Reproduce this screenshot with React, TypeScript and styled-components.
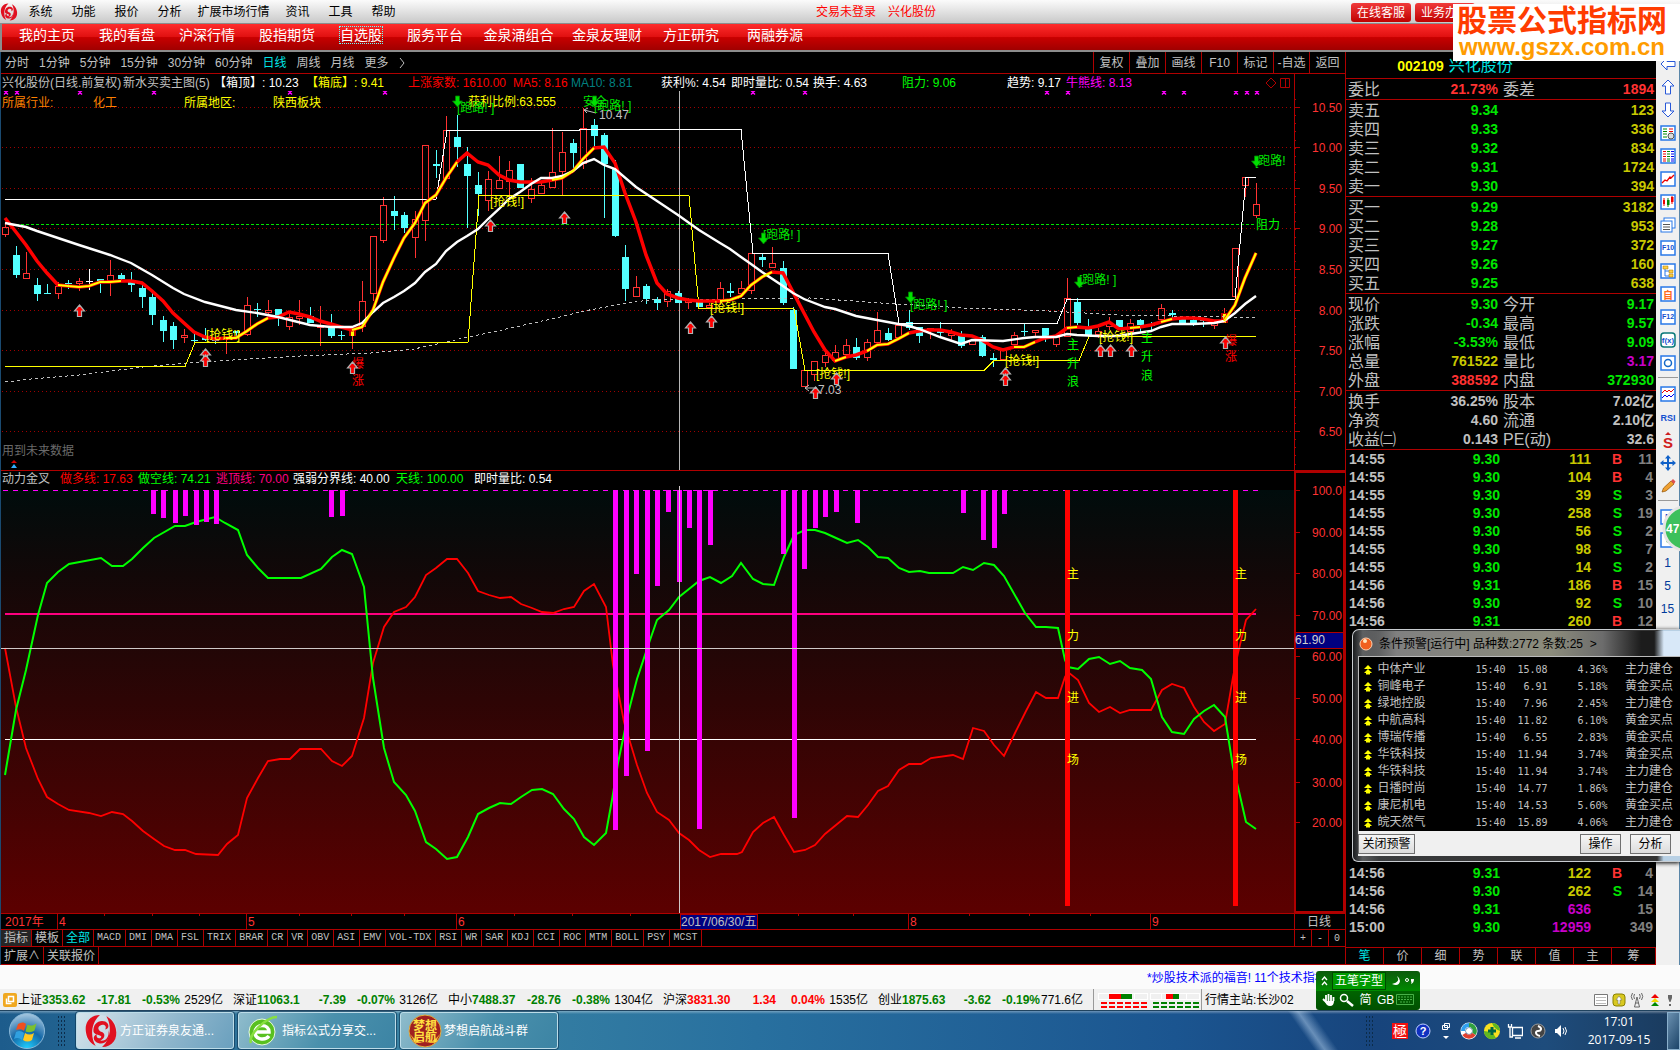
import React from "react";
import styled, { createGlobalStyle, css } from "styled-components";

const RED = "#b00000";
const UP = "#ff3232";
const DOWN = "#00e600";
const AMBER = "#c8c800";
const SILVER = "#c0c0c0";
const CYAN = "#00e5e5";
const SANS = `"Liberation Sans", "Noto Sans CJK SC", sans-serif`;
const MONO = `"Liberation Mono", "Noto Sans CJK SC", monospace`;

const GlobalStyle = createGlobalStyle`
  *, *::before, *::after { box-sizing: border-box; }
  body { margin: 0; background: #000; font: 12px/16px ${SANS}; color: ${SILVER}; overflow-x: hidden; }
  button { font: inherit; color: inherit; background: none; border: 0; padding: 0; margin: 0; cursor: pointer; white-space: nowrap; }
  svg { display: block; }
`;

/* ---------- shell ---------- */

const Desktop = styled.div`
  position: relative;
  display: flex;
  flex-direction: column;
  min-height: 100vh;
`;

const MenuBar = styled.header`
  display: grid;
  grid-template-columns: 19px 15fr auto 14fr;
  align-items: center;
  height: 23px;
  background: linear-gradient(#fbfbfb, #c9c9c9);
  color: #000;
`;

const MenuList = styled.nav`
  display: flex;
`;

const MenuItem = styled.button<{ $w: number }>`
  width: ${(p) => p.$w}px;
  height: 22px;
`;

const LoginState = styled.div`
  display: flex;
  gap: 12px;
  color: #f00;
`;

const ServiceButtons = styled.div`
  display: flex;
  justify-content: flex-end;
  gap: 4px;
  padding: 3px 205px 0 0;
  align-self: start;
`;

const ServiceButton = styled.button`
  width: 60px;
  height: 19px;
  border-radius: 3px;
  background: linear-gradient(#f03a3a, #c00000);
  color: #fff;
`;

const NavBar = styled.nav`
  display: flex;
  height: 29px;
  padding: 0 5px;
  border: solid #8c8c8c;
  border-width: 1px 0 2px 2px;
  background: linear-gradient(#ff2c2c, #e01010 50%, #c80000 52%, #a00000);
`;

const NavTab = styled.button<{ $w: number }>`
  width: ${(p) => p.$w}px;
  color: #fff;
  font-size: 14px;
  line-height: 16px;
  padding-bottom: 4px;
`;

const NavLabel = styled.span<{ $on?: boolean }>`
  outline: ${(p) => (p.$on ? "1px dotted #6ff" : "none")};
`;

const Workspace = styled.main`
  display: grid;
  grid-template-columns: minmax(0, 1fr) 311px 24px;
`;

const ChartColumn = styled.section`
  display: flex;
  flex-direction: column;
  min-width: 0;
  border-left: 1px solid #1a4a70;
`;

/* ---------- period bar ---------- */

const PeriodBar = styled.div`
  display: flex;
  justify-content: space-between;
  height: 22px;
  border-bottom: 1px solid ${RED};
`;

const PeriodList = styled.div`
  display: flex;
  align-items: center;
  gap: 10px;
  padding-left: 4px;
`;

const Period = styled.button<{ $on?: boolean }>`
  color: ${(p) => (p.$on ? CYAN : SILVER)};
`;

const ToolList = styled.div`
  display: flex;
`;

const Tool = styled.button`
  width: 36px;
  border-left: 1px solid ${RED};
`;

/* ---------- charts ---------- */

const Legend = styled.div<{ $cols: string; $top?: boolean }>`
  display: grid;
  grid-template-columns: ${(p) => p.$cols};
  height: ${(p) => (p.$top ? 16 : 17)}px;
  padding-left: 1px;
  border-top: ${(p) => (p.$top ? `1px solid ${RED}` : "0")};
  line-height: ${(p) => (p.$top ? 16 : 18)}px;
  white-space: nowrap;
`;

const LegendItem = styled.span<{ $c?: string }>`
  color: ${(p) => p.$c ?? SILVER};
`;

const LegendTools = styled.span`
  display: flex;
  align-items: center;
  gap: 4px;
`;

const AxisCap = styled.span<{ $box?: boolean }>`
  border-left: ${(p) => (p.$box ? 2 : 1)}px solid ${RED};
  border-top: ${(p) => (p.$box ? `2px solid ${RED}` : "0")};
`;

const Plot = styled.svg`
  width: 100%;
  height: auto;
  font-family: ${SANS};
  font-size: 12px;
`;

const TabRow = styled.div<{ $last?: boolean }>`
  display: flex;
  height: ${(p) => (p.$last ? 19 : 17)}px;
  border-top: 1px solid ${RED};
  border-bottom: ${(p) => (p.$last ? `1px solid ${RED}` : "0")};
`;

const IndicatorTab = styled.button<{ $on?: boolean; $dark?: boolean }>`
  padding: 0 3px;
  border-right: 1px solid ${RED};
  color: ${(p) => (p.$on ? CYAN : SILVER)};
  background: ${(p) => (p.$dark ? "#262626" : "none")};
  line-height: 16px;
`;

const CodeTab = styled.button`
  padding: 0 4px 0 3px;
  border-right: 1px solid ${RED};
  font: 10px/16px ${MONO};
`;

const ZoomButtons = styled.div`
  display: flex;
  margin-left: auto;
  width: 51px;
`;

const ZoomButton = styled.button`
  flex: 1;
  border-left: 1px solid ${RED};
  font: 10px/15px ${MONO};
`;

/* ---------- quote panel ---------- */

const QuotePanel = styled.aside`
  display: flex;
  flex-direction: column;
  border-left: 1px solid ${RED};
`;

const QuoteTitle = styled.h1`
  display: flex;
  justify-content: center;
  gap: 5px;
  height: 27px;
  margin: 0;
  padding: 2px 92px 0 0;
  border-bottom: 1px solid ${RED};
  font-size: 16px;
  line-height: 24px;
  font-weight: 400;
  color: ${CYAN};
`;

const StockCode = styled.strong`
  color: #ff0;
  font-size: 14px;
`;

const QuoteTable = styled.table`
  width: 100%;
  table-layout: fixed;
  border-collapse: separate;
  border-spacing: 0;
  padding-top: 1px;
  border-bottom: 1px solid ${RED};
  line-height: 19px;
`;

const QuoteLabel = styled.th<{ $second?: boolean }>`
  width: ${(p) => (p.$second ? 72 : 58)}px;
  height: 19px;
  padding: 0 0 0 ${(p) => (p.$second ? 3 : 2)}px;
  font-size: 16px;
  font-weight: 400;
  text-align: left;
  white-space: nowrap;
`;

const QuoteValue = styled.td<{ $c: string; $w?: number }>`
  width: ${(p) => (p.$w ? p.$w + "px" : "auto")};
  height: 19px;
  padding: 0 2px 0 0;
  text-align: right;
  font-size: 14px;
  font-weight: 700;
  color: ${(p) => p.$c};
`;

const TickTable = styled.table`
  width: 100%;
  table-layout: fixed;
  border-collapse: separate;
  border-spacing: 0;
  font-size: 14px;
  font-weight: 700;
  line-height: 18px;
`;

const Tick = styled.td<{ $w?: number; $c?: string; $left?: boolean }>`
  width: ${(p) => (p.$w ? p.$w + "px" : "auto")};
  height: 18px;
  padding: 0 3px;
  text-align: ${(p) => (p.$left ? "left" : "right")};
  color: ${(p) => p.$c ?? SILVER};
`;

const Spacer = styled.div`
  flex: none;
  height: 234px;
`;

const QuoteTabs = styled.div`
  display: grid;
  grid-template-columns: repeat(7, 38px) 1fr;
  height: 18px;
  margin-top: auto;
  border: solid ${RED};
  border-width: 1px 1px 1px 0;
`;

const QuoteTab = styled.button<{ $on?: boolean }>`
  color: ${(p) => (p.$on ? CYAN : SILVER)};
  border-right: 1px solid ${RED};
  &:last-child { border-right: 0; }
`;

const SideBar = styled.aside`
  display: flex;
  flex-direction: column;
  align-items: center;
  background: #f0f0f0;
  border-right: 1px solid #5a86a8;
`;

const SideButton = styled.button`
  display: grid;
  place-items: center;
  flex: none;
  width: 20px;
  height: 23px;
  color: #003a9b;
`;

const SideRule = styled.hr`
  flex: none;
  width: 20px;
  margin: 3px 0 4px;
  border: 0;
  border-top: 1px solid #999;
`;

/* ---------- bottom bars ---------- */

const Marquee = styled.div`
  display: flex;
  align-items: center;
  justify-content: flex-end;
  height: 24px;
  padding: 2px 363px 0 0;
  background: #fbfbfb;
`;

const MarqueeLink = styled.a`
  width: 170px;
  overflow: hidden;
  white-space: nowrap;
  color: #00f;
  text-decoration: none;
`;

const StatusBar = styled.footer`
  display: flex;
  align-items: center;
  height: 22px;
  padding-left: 3px;
  background: #f0f0f0;
  border-bottom: 1px solid #20435f;
  color: #000;
`;

const IndexList = styled.ul`
  display: flex;
  margin: 0;
  padding: 0 0 0 1px;
  list-style: none;
`;

const IndexItem = styled.li<{ $c: string }>`
  display: grid;
  grid-template-columns: 24px 47px 42px 49px 43px;
  width: 215px;
  white-space: nowrap;
  text-align: right;
  b { color: ${(p) => p.$c}; }
  b:nth-child(2) { text-align: left; }
`;

const Station = styled.div`
  display: flex;
  align-items: center;
  height: 21px;
  padding-left: 3px;
  border-left: 1px solid #999;
`;

const StatusIcons = styled.div`
  display: flex;
  align-items: center;
  gap: 4px;
  margin-left: auto;
  padding-right: 6px;
`;

const TaskBar = styled.footer`
  display: flex;
  align-items: center;
  height: 39px;
  background:
    linear-gradient(rgba(255,255,255,.35), rgba(255,255,255,0) 8%),
    linear-gradient(55deg, transparent 77%, rgba(170,200,230,.55) 77.6%, transparent 78.4%),
    linear-gradient(90deg, #1d5c8c, #3a84a4 25%, #28709f 45%, #1b5590 70%, #17447c 82%, #1e4c7c 92%, #1a3a5c);
  color: #fff;
`;

const StartButton = styled.button`
  width: 54px;
  height: 39px;
  display: grid;
  place-items: center;
`;

const Grip = styled.span<{ $dark?: boolean }>`
  width: 9px;
  height: 31px;
  margin: ${(p) => (p.$dark ? "0 13px 0 0" : "0 10px 0 3px")};
  background: radial-gradient(circle, #0c2c4a 1px, transparent 1px) 0 0 / 3px 4px;
`;

const TaskButton = styled.button<{ $on?: boolean }>`
  display: flex;
  align-items: center;
  gap: 2px;
  width: 158px;
  height: 37px;
  margin-right: 4px;
  padding-left: 7px;
  border: 1px solid #bcdce8;
  border-radius: 3px;
  box-shadow: 0 0 0 1px rgba(10, 50, 80, 0.6);
  background: ${(p) =>
    p.$on
      ? "linear-gradient(120deg, #d4e4ec, #8fb6cc 60%, #6aa0be)"
      : "linear-gradient(120deg, #8fbccc, #4a90ac 55%, #3c84a4)"};
`;

const Tray = styled.div`
  display: flex;
  align-items: center;
  gap: 3px;
  margin-left: auto;
`;

const TrayButton = styled.button`
  display: grid;
  place-items: center;
  width: 20px;
  height: 24px;
`;

const Clock = styled.time`
  width: 90px;
  text-align: center;
  font: 12px/18px "Open Sans", sans-serif;
`;

const ShowDesktop = styled.button`
  width: 13px;
  height: 38px;
  border: 1px solid #8ab0cc;
  background: linear-gradient(120deg, #6a90b0, #1c4468);
`;

/* ---------- overlays ---------- */

const Watermark = styled.div`
  position: absolute;
  top: 4px;
  right: 0;
  width: 227px;
  height: 57px;
  background: #fff;
  text-align: center;
  padding-right: 9px;
  font-weight: 700;
`;

const MarkName = styled.div`
  font-size: 30px;
  line-height: 34px;
  color: #ff3c00;
`;

const MarkUrl = styled.div`
  font-size: 24px;
  line-height: 18px;
  color: #ff9c00;
`;

const Bubble = styled.div`
  position: absolute;
  top: 505px;
  right: 0;
  width: 19px;
  height: 47px;
  overflow: hidden;
`;

const AlertWindow = styled.section`
  position: absolute;
  top: 629px;
  right: 0;
  width: 328px;
  padding: 1px 0 5px 5px;
  border: 1px solid #c8ccd0;
  border-right: 0;
  border-radius: 7px 0 0 6px;
  background: linear-gradient(90deg, #1a1c1e, #5a5c5e 3%, #3a3c3e 8%, #333 60%, #333 93%, #b8d0e4 95%);
  box-shadow: 0 1px 4px #000;
`;

const AlertTitle = styled.h2`
  display: flex;
  align-items: center;
  gap: 6px;
  height: 25px;
  margin: 0;
  padding-left: 1px;
  font-size: 12px;
  font-weight: 400;
  color: #000;
  background: linear-gradient(90deg, transparent, #808080 12%, #8c8c7c 60%, #6c6c6c 76%, #1c1c1c 88%, #1c1c1c 92%, #d8e8f8 95%);
`;

const AlertTable = styled.table`
  width: 323px;
  table-layout: fixed;
  border-collapse: collapse;
  background: #000;
  border: solid #bbb;
  border-width: 1px 0 0 1px;
  td { height: 17px; padding: 0; line-height: 17px; white-space: nowrap; }
  tr:first-child td { height: 21px; padding-top: 4px; }
`;

const AlertCell = styled.td<{ $w?: number; $num?: boolean }>`
  width: ${(p) => (p.$w ? p.$w + "px" : "auto")};
  ${(p) =>
    p.$num &&
    css`
      text-align: right;
      font: 10px/17px "DejaVu Sans Mono", monospace;
    `}
`;

const AlertGlyph = styled.svg`
  width: 14px;
  height: 10px;
`;

const AlertSignal = styled.td`
  text-align: right;
  &&& { padding-right: 8px; }
`;

const AlertFooter = styled.div`
  display: flex;
  gap: 9px;
  height: 25px;
  padding-top: 3px;
  background: #f0f0f0;
`;

const AlertButton = styled.button<{ $w: number; $push?: boolean }>`
  width: ${(p) => p.$w}px;
  height: 20px;
  margin-left: ${(p) => (p.$push ? "auto" : "0")};
  border: 1px solid #707070;
  background: linear-gradient(#f6f6f6, #dcdcdc);
  color: #000;
  &:last-child { margin-right: 9px; }
`;

const Ime = styled.div`
  position: absolute;
  bottom: 40px;
  right: 260px;
  width: 104px;
  height: 39px;
  border-radius: 3px;
  background: linear-gradient(#0c5a0c, #008a00 50%, #006400 52%, #005000);
  color: #fff;
`;

const ImeRow = styled.div`
  display: flex;
  align-items: center;
  gap: 4px;
  height: 19px;
  padding-left: 5px;
`;

const ImeButton = styled.button<{ $wide?: boolean }>`
  display: grid;
  place-items: center;
  width: ${(p) => (p.$wide ? 54 : 15)}px;
  height: 18px;
  background: ${(p) => (p.$wide ? "#009a00" : "none")};
  border: ${(p) => (p.$wide ? "1px solid #004a00" : "0")};
`;

/* ---------- data ---------- */

const menus: [string, number][] = [
  ["系统", 43], ["功能", 43], ["报价", 43], ["分析", 43],
  ["扩展市场行情", 85], ["资讯", 43], ["工具", 43], ["帮助", 43],
];

const navTabs: [string, number][] = [
  ["我的主页", 80], ["我的看盘", 80], ["沪深行情", 80], ["股指期货", 80], ["自选股", 68],
  ["服务平台", 80], ["金泉涌组合", 87], ["金泉友理财", 90], ["方正研究", 78], ["两融券源", 90],
];

const periods = ["分时", "1分钟", "5分钟", "15分钟", "30分钟", "60分钟", "日线", "周线", "月线", "更多"];
const tools = ["复权", "叠加", "画线", "F10", "标记", "-自选", "返回"];

// kind, body top, body bottom, high, low
type Candle = [string, number, number, number, number];
const candles: Candle[] = [
  ["r", 227, 235, 224, 237], ["c", 255, 275, 246, 278], ["r", 273, 279, 252, 279], ["c", 285, 294, 278, 301],
  ["c", 293, 294, 284, 294], ["r", 286, 294, 282, 299], ["c", 283, 284, 280, 289], ["r", 281, 284, 278, 291],
  ["w", 281, 282, 269, 290], ["c", 279, 281, 279, 293], ["r", 275, 281, 260, 296], ["c", 275, 279, 273, 280],
  ["c", 280, 285, 272, 292], ["c", 288, 297, 284, 308], ["c", 297, 315, 293, 325], ["c", 320, 331, 316, 342],
  ["c", 326, 340, 322, 349], ["r", 335, 338, 329, 343], ["c", 340, 341, 334, 343], ["c", 336, 340, 328, 341],
  ["c", 339, 341, 337, 344], ["r", 338, 340, 338, 354], ["c", 331, 333, 331, 338], ["r", 305, 335, 297, 336],
  ["c", 309, 310, 303, 317], ["r", 310, 313, 300, 315], ["c", 309, 315, 309, 326], ["r", 317, 327, 314, 330],
  ["r", 316, 319, 300, 325], ["c", 316, 323, 307, 323], ["r", 326, 328, 306, 346], ["c", 326, 336, 314, 338],
  ["c", 335, 336, 331, 340], ["f", 328, 336, 328, 349], ["r", 301, 327, 281, 332], ["r", 236, 294, 236, 301],
  ["r", 205, 241, 197, 243], ["c", 211, 216, 196, 230], ["c", 215, 228, 212, 233], ["r", 219, 238, 211, 258],
  ["r", 145, 221, 145, 241], ["c", 164, 166, 150, 178], ["r", 130, 179, 116, 179], ["c", 137, 147, 115, 167],
  ["c", 164, 176, 147, 228], ["c", 185, 194, 172, 216], ["r", 179, 201, 171, 211], ["r", 180, 189, 156, 189],
  ["r", 170, 182, 161, 200], ["c", 164, 188, 164, 188], ["r", 189, 199, 178, 203], ["r", 185, 194, 183, 194],
  ["r", 172, 188, 128, 188], ["r", 152, 172, 132, 195], ["c", 143, 153, 139, 168], ["r", 128, 164, 108, 169],
  ["c", 125, 136, 119, 147], ["c", 135, 164, 133, 218], ["c", 169, 236, 160, 237], ["c", 257, 289, 245, 301],
  ["r", 287, 297, 276, 297], ["c", 286, 299, 284, 304], ["c", 299, 303, 297, 310], ["r", 291, 302, 289, 307],
  ["c", 293, 303, 291, 303], ["r", 300, 303, 298, 309], ["c", 302, 307, 302, 307], ["r", 305, 308, 303, 308],
  ["r", 288, 302, 282, 305], ["c", 291, 293, 283, 297], ["r", 288, 294, 281, 297], ["r", 253, 291, 253, 294],
  ["c", 257, 260, 253, 267], ["r", 263, 268, 247, 268], ["c", 268, 303, 261, 305], ["c", 310, 369, 307, 369],
  ["r", 370, 387, 370, 387], ["r", 361, 375, 361, 381], ["r", 355, 363, 349, 367], ["r", 352, 361, 345, 361],
  ["r", 345, 355, 339, 358], ["c", 347, 358, 338, 360], ["r", 342, 358, 339, 361], ["r", 330, 343, 312, 345],
  ["c", 333, 340, 328, 341], ["r", 325, 338, 325, 338], ["c", 322, 328, 310, 330], ["c", 327, 336, 327, 343],
  ["r", 328, 330, 328, 339], ["c", 331, 333, 322, 337], ["r", 333, 336, 329, 341], ["c", 334, 346, 331, 348],
  ["r", 340, 345, 340, 345], ["c", 337, 356, 335, 357], ["c", 358, 360, 353, 367], ["r", 350, 360, 350, 360],
  ["r", 335, 345, 332, 345], ["c", 331, 332, 323, 336], ["r", 330, 333, 330, 336], ["c", 328, 337, 328, 342],
  ["r", 337, 345, 337, 347], ["r", 298, 337, 278, 337], ["c", 302, 323, 298, 325], ["c", 328, 336, 319, 336],
  ["r", 331, 335, 328, 338], ["r", 323, 327, 317, 330], ["c", 320, 327, 320, 327], ["r", 323, 332, 319, 332],
  ["c", 320, 325, 319, 332], ["c", 325, 326, 322, 330], ["r", 308, 320, 304, 320], ["c", 313, 315, 310, 318],
  ["c", 317, 323, 317, 323], ["c", 320, 325, 318, 326], ["c", 319, 321, 319, 327], ["r", 323, 326, 323, 329],
  ["f", 313, 323, 308, 323], ["r", 248, 297, 248, 297], ["r", 177, 186, 177, 197], ["r", 204, 216, 183, 218],
];

const fastLine = [
  218, 232, 245, 261, 273, 285, 286, 287, 286, 282, 282, 281, 281, 283, 291, 301, 313, 323, 332, 337,
  339, 338, 338, 331, 324, 318, 317, 312, 314, 317, 321, 324, 327, 330, 327, 310, 282, 258, 238, 223,
  203, 195, 178, 162, 153, 162, 165, 175, 180, 182, 182, 182, 180, 178, 171, 159, 148, 147, 163, 193,
  222, 255, 283, 294, 298, 300, 301, 301, 301, 300, 296, 285, 277, 272, 273, 292, 313, 332, 350, 361,
  357, 355, 351, 345, 344, 339, 333, 331, 330, 330, 332, 335, 336, 340, 347, 350, 347, 347, 342, 338,
  336, 328, 327, 328, 326, 322, 329, 328, 327, 325, 322, 319, 318, 318, 319, 321, 321, 305, 278, 253,
];

const risingRuns: [number, number][] = [
  [5, 11], [21, 25], [33, 43], [52, 56], [68, 73], [79, 80], [82, 86], [96, 98], [101, 102], [107, 108], [110, 111], [116, 119],
];

const slowLine: [number, number][] = [
  [0, 223], [2, 227], [3, 231], [5, 238], [7, 245], [10, 255], [12, 263], [14, 275], [16, 288], [17, 294], [19, 302],
  [22, 310], [24, 313], [26, 317], [29, 325], [31, 327], [33, 327], [34, 323], [35, 312], [36, 303], [37, 297],
  [38, 291], [39, 283], [40, 272], [41, 264], [42, 251], [43, 242], [44, 236], [45, 229], [46, 219], [47, 209],
  [48, 199], [49, 192], [50, 184], [51, 178], [52, 178], [53, 176], [54, 171], [55, 163], [56, 159], [57, 165],
  [58, 169], [60, 187], [62, 201], [64, 215], [66, 230], [68, 243], [69, 249], [70, 257], [71, 264], [72, 272],
  [74, 286], [75, 293], [76, 299], [78, 307], [79, 309], [81, 316], [83, 320], [86, 326], [87, 329], [89, 337],
  [91, 344], [92, 340], [95, 341], [97, 338], [98, 337], [100, 337], [101, 334], [102, 335], [104, 336], [106, 336],
  [107, 334], [109, 331], [110, 327], [111, 324], [113, 324], [115, 323], [116, 321], [117, 313], [118, 304], [119, 296],
];

const px = (i: number) => Math.round(5 + i * 10.51);

const crossMarks = [6, 17, 80, 154, 290, 385, 753, 805, 1047, 1068, 1164, 1184, 1236, 1247, 1257];
const upArrows: [number, number][] = [
  [79, 311], [205, 355], [205, 361], [352, 368], [490, 226], [564, 218], [690, 328], [711, 322], [815, 393],
  [836, 379], [1005, 374], [1005, 380], [1100, 351], [1110, 351], [1131, 351], [1225, 343],
];
const downArrows: [number, number][] = [[457, 101], [594, 101], [763, 238], [910, 297], [1079, 282], [1256, 161]];

// text, x, baseline, colour
type Note = [string, number, number, string];
const G = "#00e600";
const Y = "#ffff00";
const notes: Note[] = [
  ["所属行业:", 2, 107, "#ff8000"], ["化工", 93, 107, "#ff8000"], ["所属地区:", 184, 107, Y], ["陕西板块", 273, 107, Y],
  ["获利比例:63.555", 468, 106, Y],
  ["[跑路! ]", 457, 112, G], ["安全", 583, 106, G], ["[跑路! ]", 594, 110, G], ["[跑路! ]", 763, 239, G],
  ["[跑路! ]", 910, 309, G], ["[跑路! ]", 1079, 284, G], ["[跑路!", 1255, 165, G],
  ["[抢钱!]", 490, 206, Y], ["[抢钱!]", 206, 339, Y], ["[抢钱!]", 710, 312, Y], ["[抢钱!]", 816, 378, Y],
  ["[抢钱!]", 1005, 365, Y], ["[抢钱!]", 1099, 341, Y],
  ["爆", 352, 368, "#f00"], ["涨", 352, 385, "#f00"], ["爆", 1225, 345, "#f00"], ["涨", 1225, 361, "#f00"],
  ["主", 1067, 349, "#0f0"], ["升", 1067, 368, "#0f0"], ["浪", 1067, 386, "#0f0"],
  ["主", 1141, 342, "#0f0"], ["升", 1141, 361, "#0f0"], ["浪", 1141, 380, "#0f0"],
  ["阻力", 1256, 229, "#0f0"], ["10.47", 599, 119, SILVER], ["7.03", 818, 394, SILVER],
  ["用到未来数据", 2, 455, "#6a6a6a"],
];

const priceTicks: [string, number][] = [
  ["10.50", 107], ["10.00", 147], ["9.50", 188], ["9.00", 228], ["8.50", 269], ["8.00", 310], ["7.50", 350], ["7.00", 391], ["6.50", 431],
];
const powerTicks: [string, number][] = [
  ["100.0", 490], ["90.00", 532], ["80.00", 573], ["70.00", 615], ["60.00", 656], ["50.00", 698], ["40.00", 739], ["30.00", 782], ["20.00", 822],
];

const shortLine =
  "5,775 16,710 26,670 38,615 47,583 58,572 69,564 101,558 112,566 123,566 132,559 143,548 154,538 175,526 185,526 196,522 215,517 225,523 238,530 247,555 258,568 268,578 301,578 321,569 332,557 342,550 352,554 364,587 373,678 384,748 394,782 406,795 415,811 426,842 436,849 447,859 457,857 468,837 478,814 489,808 500,803 511,804 521,797 532,790 542,789 553,794 564,809 574,819 584,837 594,845 606,833 612,800 618,763 629,710 637,679 650,640 657,620 669,610 679,597 689,589 699,581 710,577 721,583 732,576 741,563 753,579 763,584 774,585 784,557 794,535 805,530 815,530 825,533 836,538 847,543 858,540 868,547 878,557 888,558 899,568 909,572 920,571 929,573 953,573 963,567 973,570 984,563 994,565 1004,576 1025,613 1036,627 1046,627 1058,628 1065,660 1068,667 1078,669 1089,659 1099,657 1110,664 1120,661 1130,668 1142,670 1151,679 1162,717 1172,732 1184,734 1194,719 1204,711 1214,705 1225,717 1233,767 1238,787 1246,822 1256,829";
const longLine =
  "5,648 16,707 26,748 38,779 47,797 58,804 69,810 89,813 101,816 112,812 123,814 132,821 143,831 154,839 164,846 175,850 185,850 196,854 218,855 227,844 238,835 247,798 258,778 268,761 280,759 290,759 300,749 321,749 332,761 342,766 352,756 364,718 373,663 384,627 394,612 406,607 415,597 426,575 436,568 447,559 457,559 468,573 478,591 489,595 500,598 511,597 521,604 532,608 542,612 553,613 564,609 574,607 584,591 594,584 606,607 613,665 624,722 637,765 647,793 657,812 669,820 679,833 689,840 699,850 710,857 721,854 737,854 742,852 753,832 763,823 774,817 784,835 794,852 805,850 815,845 825,834 836,825 847,816 858,817 868,805 878,791 888,786 899,770 909,764 921,764 931,758 953,755 963,759 973,728 984,731 994,745 1004,756 1015,733 1026,711 1036,692 1046,698 1058,698 1065,677 1068,672 1078,680 1089,703 1099,712 1110,707 1120,713 1130,710 1151,710 1162,690 1172,684 1184,688 1194,707 1204,722 1214,731 1225,724 1233,677 1238,653 1246,620 1256,609";

const hangBars: [number, number][] = [
  [153, 514], [163, 518], [175, 523], [185, 516], [196, 525], [206, 522], [216, 524], [331, 517], [342, 516],
  [615, 830], [626, 776], [636, 574], [647, 751], [657, 586], [668, 512], [679, 582], [689, 528], [699, 829],
  [710, 545], [783, 554], [794, 818], [804, 569], [815, 528], [825, 517], [836, 512], [857, 523], [963, 513],
  [983, 540], [994, 548], [1004, 514],
];

const codes = ["MACD", "DMI", "DMA", "FSL", "TRIX", "BRAR", "CR", "VR", "OBV", "ASI", "EMV", "VOL-TDX", "RSI", "WR", "SAR", "KDJ", "CCI", "ROC", "MTM", "BOLL", "PSY", "MCST"];

type QuoteRow = [string, string, string, string, string, string];
const quoteGroups: QuoteRow[][] = [
  [["委比", "21.73%", UP, "委差", "1894", UP]],
  [
    ["卖五", "9.34", DOWN, "", "123", AMBER], ["卖四", "9.33", DOWN, "", "336", AMBER], ["卖三", "9.32", DOWN, "", "834", AMBER],
    ["卖二", "9.31", DOWN, "", "1724", AMBER], ["卖一", "9.30", DOWN, "", "394", AMBER],
  ],
  [
    ["买一", "9.29", DOWN, "", "3182", AMBER], ["买二", "9.28", DOWN, "", "953", AMBER], ["买三", "9.27", DOWN, "", "372", AMBER],
    ["买四", "9.26", DOWN, "", "160", AMBER], ["买五", "9.25", DOWN, "", "638", AMBER],
  ],
  [
    ["现价", "9.30", DOWN, "今开", "9.17", DOWN], ["涨跌", "-0.34", DOWN, "最高", "9.57", DOWN], ["涨幅", "-3.53%", DOWN, "最低", "9.09", DOWN],
    ["总量", "761522", AMBER, "量比", "3.17", "#c800c8"], ["外盘", "388592", UP, "内盘", "372930", DOWN],
  ],
  [
    ["换手", "36.25%", SILVER, "股本", "7.02亿", SILVER], ["净资", "4.60", SILVER, "流通", "2.10亿", SILVER],
    ["收益㈡", "0.143", SILVER, "PE(动)", "32.6", SILVER],
  ],
];

type TickRow = [string, string, string, string, string];
const ticks: TickRow[] = [
  ["14:55", "9.30", "111", "B", "11"], ["14:55", "9.30", "104", "B", "4"], ["14:55", "9.30", "39", "S", "3"],
  ["14:55", "9.30", "258", "S", "19"], ["14:55", "9.30", "56", "S", "2"], ["14:55", "9.30", "98", "S", "7"],
  ["14:55", "9.30", "14", "S", "2"], ["14:56", "9.31", "186", "B", "15"], ["14:56", "9.30", "92", "S", "10"],
  ["14:56", "9.31", "260", "B", "12"],
];
const lastTicks: TickRow[] = [
  ["14:56", "9.31", "122", "B", "4"], ["14:56", "9.30", "262", "S", "14"], ["14:56", "9.31", "636", "", "15"], ["15:00", "9.30", "12959", "", "349"],
];

const alerts: [string, string, string, string][] = [
  ["中体产业", "15.08", "4.36%", "主力建仓"], ["铜峰电子", "6.91", "5.18%", "黄金买点"], ["绿地控股", "7.96", "2.45%", "主力建仓"],
  ["中航高科", "11.82", "6.10%", "黄金买点"], ["博瑞传播", "6.55", "2.83%", "黄金买点"], ["华铁科技", "11.94", "3.74%", "黄金买点"],
  ["华铁科技", "11.94", "3.74%", "主力建仓"], ["日播时尚", "14.77", "1.86%", "主力建仓"], ["康尼机电", "14.53", "5.60%", "黄金买点"],
  ["皖天然气", "15.89", "4.06%", "主力建仓"],
];

const indexes: [string, string, string, string, string, string][] = [
  ["上证", "3353.62", "-17.81", "-0.53%", "2529亿", "#008000"], ["深证", "11063.1", "-7.39", "-0.07%", "3126亿", "#008000"],
  ["中小", "7488.37", "-28.76", "-0.38%", "1304亿", "#008000"], ["沪深", "3831.30", "1.34", "0.04%", "1535亿", "#f00"],
  ["创业", "1875.63", "-3.62", "-0.19%", "771.6亿", "#008000"],
];

/* ---------- drawings ---------- */

function Swirl({ size, back }: { size: number; back?: boolean }) {
  return (
    <svg width={size} height={size} viewBox="0 0 32 32" aria-hidden="true">
      {back && <circle cx="16" cy="16" r="15" fill="#fff" opacity=".2" />}
      <g fill="#e01020">
        <path d="M15 1C5 1 0 9 2 18C3 24 7 28 11 30C6 22 6 9 15 1z" />
        <path d="M17 31C27 31 32 23 30 14C29 8 25 4 21 2C26 10 26 23 17 31z" />
        <path d="M9 17C8 9 14 5 20 7C24 9 24 14 20 14.500C22 11 18 9 15 11C12 13 14 16 17 17C21 19 19 24 15 25C21 26 24 21 23 15C26 23 20 29 14 27.500C8 26 8 20 12 19C11 22 14 24 16 22C18 20 10 20 9 17z" />
      </g>
    </svg>
  );
}

function UpMark({ x, y }: { x: number; y: number }) {
  return (
    <path
      d={`M${x + 0.5} ${y - 6}l5 6h-3v5.500h-4v-5.500h-3z`}
      fill="#ff0000" stroke="#b0b0b0" strokeWidth="1.200"
    />
  );
}

function DownMark({ x, y }: { x: number; y: number }) {
  return <path d={`M${x + 0.5} ${y + 6}l-5-6h3v-5h4v5h3z`} fill="#00e000" stroke="#008000" strokeWidth=".8" />;
}

function CandleMark({ i, c }: { i: number; c: Candle }) {
  const [kind, top, bottom, high, low] = c;
  const x = px(i);
  if (kind === "r") {
    return (
      <g>
        <path d={`M${x + 0.5} ${high}V${top}M${x + 0.5} ${bottom}V${low}`} stroke={UP} />
        <rect x={x - 2.5} y={top + 0.5} width="6" height={Math.max(1, bottom - top - 1)} fill="none" stroke={UP} />
      </g>
    );
  }
  const fill = kind === "c" ? "#54ffff" : kind === "w" ? "#ffffff" : "#c00000";
  return (
    <g>
      <path d={`M${x + 0.5} ${high}V${low}`} stroke={kind === "f" ? UP : fill} />
      <rect x={x - 3} y={top} width="7" height={Math.max(1, bottom - top)} fill={fill} />
      {kind === "f" && <rect x={x - 1} y={top + 1} width="3" height={bottom - top - 1} fill="#ff0" />}
    </g>
  );
}

function PriceChart() {
  const pts = (from: number, to: number) => fastLine.slice(from, to + 1).map((y, k) => `${px(from + k)},${y}`).join(" ");
  const minor = Array.from({ length: 46 }, (_, k) => 99 + k * 8.1);
  return (
    <Plot viewBox="1 91 1344 379" role="img" aria-label="日线主图">
      <g shapeRendering="crispEdges">
        {priceTicks.map(([t, y]) => (
          <g key={t}>
            <path d={`M2 ${y + 0.5}H1294`} stroke="#a00000" strokeDasharray="1 3" />
            <path d={`M1294 ${y + 0.5}h6`} stroke={RED} />
          </g>
        ))}
        <path d={minor.map((y) => `M1294 ${Math.round(y) + 0.5}h2`).join("")} stroke={RED} />
        <path d="M1294.500 91V470" stroke={RED} />
        <path d="M16 224.500H1256" stroke="#00e600" strokeDasharray="3 2" />
        <path d="M679.500 91V470" stroke="#b8b8b8" />
        {candles.map((c, i) => <CandleMark key={i} i={i} c={c} />)}
      </g>
      <g fill="none">
        <polyline points="5,382 31,379 79,375 143,367 200,362 300,356 371,353 414,349 464,338 511,328 560,317 584,311 628,303 649,300 810,298 881,303 964,308 1049,311 1120,315 1224,317 1256,317" stroke="#c0c0c0" strokeDasharray="3 3" shapeRendering="crispEdges" />
        <polyline points="5,199.500 436,199.500 447,130.500 579,130.500 579,129.500 741,129.500 753,253.500 888,253.500 899,323.500 1057,323.500 1067,299.500 1235,299.500 1246,177.500 1256,177.500" stroke="#fff" shapeRendering="crispEdges" />
        <polyline points="5,366.500 185,366.500 195,342.500 468,342.500 479,195.500 689,195.500 699,308.500 794,308.500 805,370.500 984,370.500 994,360.500 1079,360.500 1089,336.500 1256,336.500" stroke="#ff0" shapeRendering="crispEdges" />
        <polyline points={pts(0, 119)} stroke="#f00" strokeWidth="3.500" />
        <polyline points={slowLine.map(([i, y]) => `${px(i)},${y}`).join(" ")} stroke="#fff" strokeWidth="2.400" />
        {risingRuns.map(([a, b]) => <polyline key={a} points={pts(a, b)} stroke="#ff0" strokeWidth="2.200" />)}
        <path d={crossMarks.map((x) => `M${x - 2} 90.500l4 4m0-4l-4 4`).join("")} stroke="#f0f" strokeWidth="1.500" />
        <path d="M584 110l12 3M584 110l4-2M584 110l3 3M805 388h12M805 388l4-3M805 388l4 3" stroke={SILVER} />
        <path d="M11 463l3-3 3 3z" fill="#d00000" />
        <path d="M11 468l3-4 3 4z" fill="#30b0ff" />
      </g>
      {notes.map(([t, x, y, c], k) => <text key={k} x={x} y={y} fill={c}>{t}</text>)}
      {upArrows.map(([x, y], k) => <UpMark key={k} x={x} y={y} />)}
      {downArrows.map(([x, y], k) => <DownMark key={k} x={x} y={y} />)}
      {priceTicks.map(([t, y]) => <text key={t} x="1342" y={y + 5} textAnchor="end" fill={UP}>{t}</text>)}
    </Plot>
  );
}

function PowerChart() {
  return (
    <Plot viewBox="1 486 1344 427" role="img" aria-label="动力金叉">
      <defs>
        <linearGradient id="heat" x1="0" y1="0" x2="0" y2="1">
          <stop offset="0" stopColor="#000c0c" />
          <stop offset=".2" stopColor="#120808" />
          <stop offset="1" stopColor="#5c0000" />
        </linearGradient>
      </defs>
      <rect x="1" y="490" width="1293" height="423" fill="url(#heat)" />
      <g shapeRendering="crispEdges" fill="none">
        <path d="M3 490.500H1259" stroke="#f0f" strokeDasharray="5 5" />
        <path d="M5 739.500H1256" stroke="#fff" />
        <path d="M5 614H1256" stroke="#ff0080" strokeWidth="2" />
      </g>
      <polyline points={longLine} fill="none" stroke="#f00" strokeWidth="1.800" />
      <polyline points={shortLine} fill="none" stroke="#0f0" strokeWidth="2" />
      <g shapeRendering="crispEdges">
        {hangBars.map(([x, y]) => <rect key={x} x={x - 2} y="490" width="5" height={y - 490} fill="#f0f" />)}
        <rect x="1065" y="490" width="5" height="416" fill="#f00" />
        <rect x="1233" y="490" width="5" height="416" fill="#f00" />
        <path d="M1 648.500H1294M679.500 486V913" stroke="#d0c8c8" fill="none" />
        <path d="M1295 486V913M1344 486V913" stroke={RED} strokeWidth="2" />
        <path d={powerTicks.map(([, y]) => `M1296 ${y + 0.5}h4`).join("")} stroke={RED} />
        <path d="M1295 912H1345" stroke={RED} strokeWidth="2" />
        <rect x="1296" y="632" width="47" height="17" fill="#000080" />
        <path d="M1296 632.500h48M1296 648.500h48" stroke={RED} />
      </g>
      {[1067, 1235].map((x) =>
        ["主", "力", "进", "场"].map((t, k) => <text key={x + t} x={x} y={578 + k * 62} fill="#ff0">{t}</text>)
      )}
      {powerTicks.map(([t, y]) => <text key={t} x="1342" y={y + 5} textAnchor="end" fill={UP}>{t}</text>)}
      <text x="1295" y="644" fill="#d0d0d0">61.90</text>
    </Plot>
  );
}

function TimeAxis() {
  return (
    <Plot viewBox="1 913 1344 16" role="img" aria-label="时间轴">
      <g shapeRendering="crispEdges" stroke={RED}>
        <path d="M1 913.500H1345M57.500 913v16M246.500 913v16M456.500 913v16M908.500 913v16M1150.500 913v16M1294.500 913v16" />
        <path d="M104.500 913v3M152.500 913v3M199.500 913v3M299.500 913v3M351.500 913v3M404.500 913v3M514.500 913v3M572.500 913v3M630.500 913v3M798.500 913v3M853.500 913v3M969.500 913v3M1029.500 913v3M1090.500 913v3" />
        <rect x="680.500" y="914.500" width="77" height="15" fill="#000080" />
      </g>
      <g fill={UP}>
        <text x="5" y="926">2017年</text>
        <text x="59" y="926">4</text>
        <text x="248" y="926">5</text>
        <text x="458" y="926">6</text>
        <text x="910" y="926">8</text>
        <text x="1152" y="926">9</text>
      </g>
      <text x="681" y="926" fill={SILVER}>2017/06/30/五</text>
      <text x="1307" y="926" fill={SILVER}>日线</text>
    </Plot>
  );
}

const frame = <rect x="1" y="1" width="14" height="14" fill="#fff" stroke="#2878e8" strokeWidth="1.500" />;
const glyph = (t: string, size = 9, fill = "#1450d0") => (
  <text x="8" y={5 + size * 0.75} textAnchor="middle" fontSize={size} fontWeight="700" fontFamily="Liberation Sans, Noto Sans CJK SC, sans-serif" fill={fill}>{t}</text>
);

const sideTop: [string, React.ReactNode][] = [
  ["后退", <path d="M1 8l6-6v3.500h8v5h-8v3.500z" fill="#fff" stroke="#2858d8" />],
  ["上移", <path d="M8 1l6 6h-3.500v8h-5v-8h-3.500z" fill="#fff" stroke="#2858d8" />],
  ["下移", <path d="M8 15l6-6h-3.500v-8h-5v8h-3.500z" fill="#fff" stroke="#2858d8" />],
  ["行情列表", <>{frame}<path d="M3 4h4M3 6.500h4M3 9h4M3 12h4" stroke="#080" /><path d="M9 4h4M9 6.500h4" stroke="#e00" /><circle cx="11" cy="11" r="3" fill="#ddd" stroke="#555" /></>],
  ["多列报价", <>{frame}<path d="M3 3.500h3M3 6h3M3 8.500h3M3 11h3M3 13h3" stroke="#e00" /><path d="M7 3.500h3M7 6h3M7 8.500h3M7 11h3M7 13h3" stroke="#080" /><path d="M11 3.500h3M11 6h3M11 8.500h3M11 11h3M11 13h3" stroke="#00e" /></>],
  ["分时图", <>{frame}<path d="M2 12l3-3 2 1 3-4 1 1 3-3" fill="none" stroke="#e00" strokeWidth="1.300" /></>],
  ["K线图", <>{frame}<path d="M4 4v8M12 2v8" stroke="#e00" /><path d="M8 4v9" stroke="#080" /><path d="M3 6h2v4H3zM11 3h2.500v5H11z" fill="#e00" /><path d="M7 6h2.500v5H7z" fill="#080" /></>],
  ["资料", <><rect x="4" y="1" width="11" height="10" fill="#fff" stroke="#2878e8" /><rect x="1" y="4" width="11" height="11" fill="#fff" stroke="#2878e8" /><path d="M3 7.500h7M3 10h7M3 12.500h7" stroke="#555" /></>],
  ["F10", <>{frame}{glyph("F10", 7)}</>],
  ["板块树", <>{frame}<path d="M5 5v8h5M5 8h5" stroke="#2878e8" fill="none" /><path d="M3 3h5v3H3zM9 7h4v3H9zM9 11h4v3H9z" fill="#ffd040" stroke="#a07000" strokeWidth=".5" /></>],
  ["自选", <>{frame}{glyph("自", 10, "#ff6a20")}</>],
  ["F12", <>{frame}{glyph("F12", 7)}</>],
  ["公式", <><rect x="1" y="1" width="14" height="14" rx="3" fill="#fff" stroke="#087878" strokeWidth="1.500" />{glyph("f(x)", 8)}</>],
  ["圆", <>{frame}<circle cx="8" cy="8" r="3.500" fill="none" stroke="#1468c8" strokeWidth="1.500" /></>],
];

const sideMid: [string, React.ReactNode][] = [
  ["指标", <>{frame}<path d="M2 7l3-3 2 2 2-2 2 2 3-3" fill="none" stroke="#e00" /><path d="M2 12l3-3 2 2 2-2 2 2 3-3" fill="none" stroke="#00e" /></>],
  ["RSI", glyph("RSI", 9)],
  ["交易", <>{glyph("S", 15, "#d02020")}<path d="M8 0l3 3H5z" fill="#d02020" /></>],
  ["移动", <path d="M8 0l3 3.500H9V7h3.500V5L16 8l-3.500 3V9H9v3.500h2L8 16l-3-3.500h2V9H3.500v2L0 8l3.500-3v2H7V3.500H5z" fill="#1060c8" />],
  ["画笔", <><path d="M2 14l1.500-4L11 3l3 3-8 7z" fill="#f0a030" stroke="#905000" strokeWidth=".7" /><path d="M11 3l2-2 2.500 2.500L14 6z" fill="#e05050" /></>],
];

const sideLow: [string, React.ReactNode][] = [
  ["F", <>{frame}{glyph("F", 10)}</>],
  ["列表", <>{frame}<circle cx="9" cy="8" r="3" fill="#3a3" /></>],
];

function SideIcon({ label, children }: { label: string; children: React.ReactNode }) {
  return (
    <SideButton aria-label={label}>
      <svg width="16" height="16" viewBox="0 0 16 16" overflow="visible" aria-hidden="true">{children}</svg>
    </SideButton>
  );
}

function TickList({ rows }: { rows: TickRow[] }) {
  return (
    <TickTable>
      <tbody>
        {rows.map(([time, price, vol, side, n], k) => (
          <tr key={k}>
            <Tick $w={58} $left>{time}</Tick>
            <Tick $w={99} $c={DOWN}>{price}</Tick>
            <Tick $w={91} $c={side ? AMBER : "#c800c8"}>{vol}</Tick>
            <Tick $w={31} $c={side === "B" ? UP : DOWN}>{side}</Tick>
            <Tick $c="#808080">{n}</Tick>
          </tr>
        ))}
      </tbody>
    </TickTable>
  );
}

function MiniBlocks({ a, b, line }: { a: number; b: number; line: string }) {
  return (
    <svg width="52" height="18" viewBox="0 0 52 18" shapeRendering="crispEdges" aria-hidden="true">
      <path d="M1 2.500h49v6H1z" fill="#f0f0f0" stroke="#fff" />
      <path d="M12 3v5M24 3v5M37 3v5" stroke="#fff" />
      <rect x={a} y="3" width={b - a} height="5" fill="#f00" />
      <rect x={b} y="3" width={(b - a) * 0.9} height="5" fill="#008000" />
      <path d="M4 11.500h46M4 15.500h46" stroke={line} strokeWidth="2" strokeDasharray="6 2" />
    </svg>
  );
}

/* ---------- page ---------- */

export default function App() {
  return (
    <Desktop>
      <GlobalStyle />
      <MenuBar>
        <Swirl size={18} />
        <MenuList>
          {menus.map(([t, w]) => <MenuItem key={t} $w={w}>{t}</MenuItem>)}
        </MenuList>
        <LoginState><span>交易未登录</span><span>兴化股份</span></LoginState>
        <ServiceButtons>
          <ServiceButton>在线客服</ServiceButton>
          <ServiceButton>业务办理</ServiceButton>
        </ServiceButtons>
      </MenuBar>
      <NavBar>
        {navTabs.map(([t, w]) => (
          <NavTab key={t} $w={w}><NavLabel $on={t === "自选股"}>{t}</NavLabel></NavTab>
        ))}
      </NavBar>

      <Workspace>
        <ChartColumn>
          <PeriodBar>
            <PeriodList>
              {periods.map((t) => <Period key={t} $on={t === "日线"}>{t}</Period>)}
              <svg width="6" height="10" viewBox="0 0 6 10" aria-hidden="true"><path d="M1 0l4 5-4 5" fill="none" stroke={SILVER} /></svg>
            </PeriodList>
            <ToolList>{tools.map((t) => <Tool key={t}>{t}</Tool>)}</ToolList>
          </PeriodBar>

          <Legend $cols="121px 91px 92px 102px 105px 58px 90px 70px 82px 89px 105px 59px 199px 1fr 51px">
            <LegendItem>兴化股份(日线.前复权)</LegendItem>
            <LegendItem>新水买卖主图(5)</LegendItem>
            <LegendItem $c="#fff">【箱顶】: 10.23</LegendItem>
            <LegendItem $c="#ff0">【箱底】: 9.41</LegendItem>
            <LegendItem $c="#f00">上涨家数: 1610.00</LegendItem>
            <LegendItem $c="#f00">MA5: 8.16</LegendItem>
            <LegendItem $c="#008080">MA10: 8.81</LegendItem>
            <LegendItem $c="#fff">获利%: 4.54</LegendItem>
            <LegendItem $c="#fff">即时量比: 0.54</LegendItem>
            <LegendItem $c="#fff">换手: 4.63</LegendItem>
            <LegendItem $c="#0f0">阻力: 9.06</LegendItem>
            <LegendItem $c="#fff">趋势: 9.17</LegendItem>
            <LegendItem $c="#f0f">牛熊线: 8.13</LegendItem>
            <LegendTools>
              <svg width="26" height="12" viewBox="0 0 26 12" aria-hidden="true">
                <path d="M6 1l5 5-5 5-5-5zM15.500 1.500h9v9h-9zM20.500 1.500v9" fill="none" stroke="#b00000" />
              </svg>
            </LegendTools>
            <AxisCap />
          </Legend>
          <PriceChart />

          <Legend $top $cols="58px 78px 78px 77px 103px 78px 1fr 51px">
            <LegendItem>动力金叉</LegendItem>
            <LegendItem $c="#f00">做多线: 17.63</LegendItem>
            <LegendItem $c="#0f0">做空线: 74.21</LegendItem>
            <LegendItem $c="#ff0080">逃顶线: 70.00</LegendItem>
            <LegendItem $c="#fff">强弱分界线: 40.00</LegendItem>
            <LegendItem $c="#0f0">天线: 100.00</LegendItem>
            <LegendItem $c="#fff">即时量比: 0.54</LegendItem>
            <AxisCap $box />
          </Legend>
          <PowerChart />
          <TimeAxis />

          <TabRow>
            <IndicatorTab $dark>指标</IndicatorTab>
            <IndicatorTab>模板</IndicatorTab>
            <IndicatorTab $on>全部</IndicatorTab>
            {codes.map((c) => <CodeTab key={c}>{c}</CodeTab>)}
            <ZoomButtons>
              <ZoomButton>+</ZoomButton>
              <ZoomButton>-</ZoomButton>
              <ZoomButton>0</ZoomButton>
            </ZoomButtons>
          </TabRow>
          <TabRow $last>
            <IndicatorTab>扩展∧</IndicatorTab>
            <IndicatorTab>关联报价</IndicatorTab>
          </TabRow>
        </ChartColumn>

        <QuotePanel>
          <QuoteTitle><StockCode>002109</StockCode>兴化股份</QuoteTitle>
          {quoteGroups.map((rows, g) => (
            <QuoteTable key={g}>
              <tbody>
                {rows.map(([a, v, c, b, w, d]) => (
                  <tr key={a}>
                    <QuoteLabel scope="row">{a}</QuoteLabel>
                    <QuoteValue $c={c} $w={96}>{v}</QuoteValue>
                    <QuoteLabel $second scope="row">{b}</QuoteLabel>
                    <QuoteValue $c={d}>{w}</QuoteValue>
                  </tr>
                ))}
              </tbody>
            </QuoteTable>
          ))}
          <TickList rows={ticks} />
          <Spacer />
          <TickList rows={lastTicks} />
          <QuoteTabs>
            {["笔", "价", "细", "势", "联", "值", "主", "筹"].map((t) => <QuoteTab key={t} $on={t === "笔"}>{t}</QuoteTab>)}
          </QuoteTabs>
        </QuotePanel>

        <SideBar>
          {sideTop.map(([l, i]) => <SideIcon key={l} label={l}>{i}</SideIcon>)}
          <SideRule />
          {sideMid.map(([l, i]) => <SideIcon key={l} label={l}>{i}</SideIcon>)}
          <SideRule />
          {sideLow.map(([l, i]) => <SideIcon key={l} label={l}>{i}</SideIcon>)}
          <SideButton>1</SideButton>
          <SideButton>5</SideButton>
          <SideButton>15</SideButton>
        </SideBar>
      </Workspace>

      <Marquee><MarqueeLink href="#">*炒股技术派的福音! 11个技术指标</MarqueeLink></Marquee>
      <StatusBar>
        <svg width="14" height="14" viewBox="0 0 14 14" aria-hidden="true">
          <rect width="14" height="14" rx="2" fill="#f0a820" /><path d="M5.500 3.500h5v5h-5zM3.500 5.500v5h5" fill="none" stroke="#fff" strokeWidth="1.500" />
        </svg>
        <IndexList>
          {indexes.map(([n, p, d, r, v, c]) => (
            <IndexItem key={n} $c={c}><span>{n}</span><b>{p}</b><b>{d}</b><b>{r}</b><span>{v}</span></IndexItem>
          ))}
        </IndexList>
        <Station><MiniBlocks a={12} b={24} line="#f00" /><MiniBlocks a={17} b={24} line="#008000" /></Station>
        <Station>行情主站:长沙02</Station>
        <StatusIcons>
          <svg width="14" height="14" viewBox="0 0 14 14" aria-hidden="true"><path d="M.5 1.500h13v11H.5z" fill="#fff" stroke="#777" /><path d="M2 4.500h10M2 7.500h10M2 10.500h10" stroke="#bbb" /></svg>
          <svg width="14" height="14" viewBox="0 0 14 14" aria-hidden="true"><rect x="1" y="1" width="12" height="12" rx="3" fill="#d8c820" stroke="#8a8000" /><path d="M7 3l3 4H8v4H6V7H4z" fill="#fff" stroke="#776" strokeWidth=".6" /></svg>
          <svg width="14" height="16" viewBox="0 0 14 16" aria-hidden="true"><path d="M7 5l-2.500 10h5zM5.500 11h3M4.500 2q-1.500 2.500 0 5M9.500 2q1.500 2.500 0 5M2.500 1q-2.500 3.500 0 7M11.500 1q2.500 3.500 0 7" fill="none" stroke="#666" /></svg>
          <svg width="14" height="14" viewBox="0 0 14 14" aria-hidden="true"><path d="M7 1l4 4H3z" fill="#e00" /><path d="M7 5l4 4H3z" fill="#f0d800" /><path d="M7 9l4 4H3z" fill="#080" /></svg>
          <svg width="8" height="12" viewBox="0 0 8 12" aria-hidden="true"><path d="M2 1h4v3L4.500 8h-1L2 4zM3 10h2v2H3z" fill="#666" /></svg>
        </StatusIcons>
      </StatusBar>

      <TaskBar>
        <StartButton aria-label="开始">
          <svg width="36" height="38" viewBox="0 0 36 38" aria-hidden="true">
            <defs>
              <radialGradient id="orb" cx=".5" cy="1" r="1"><stop offset="0" stopColor="#20d0ff" /><stop offset=".5" stopColor="#1468a8" /><stop offset="1" stopColor="#a8c8e0" /></radialGradient>
            </defs>
            <circle cx="18" cy="19" r="17.500" fill="url(#orb)" stroke="#8ab8d8" />
            <path d="M9 12c3-2 6-2 8 0l-2 7c-2-2-5-2-8-1z" fill="#f05020" />
            <path d="M18.500 12.500c3 2 6 1 9-1l-2 7c-3 2-6 2-9 1z" fill="#7cc030" />
            <path d="M7 20c3-2 6-1 8 1l-2 7c-2-2-5-3-8-1z" fill="#30a0e0" />
            <path d="M16 21c3 2 6 2 9 0l-2 7c-3 2-6 2-9 0z" fill="#ffc820" />
          </svg>
        </StartButton>
        <Grip />
        <TaskButton $on><Swirl size={34} back />方正证券泉友通...</TaskButton>
        <TaskButton>
          <svg width="34" height="32" viewBox="0 0 34 32" aria-hidden="true">
            <circle cx="16" cy="17" r="13" fill="#58c020" stroke="#e8f8e0" />
            <path d="M9 17h14c0-8-13-9-14 0c0 8 10 9 14 4" fill="none" stroke="#fff" strokeWidth="3.500" />
            <path d="M5 28C2 20 20 2 31 2" fill="none" stroke="#88e040" strokeWidth="2.500" />
          </svg>
          指标公式分享交...
        </TaskButton>
        <TaskButton>
          <svg width="34" height="34" viewBox="0 0 34 34" aria-hidden="true">
            <circle cx="17" cy="17" r="16" fill="#a02020" stroke="#e0b040" />
            <path d="M2 20q15 18 30 0l-5 9H7z" fill="#f0b030" />
            <text x="17" y="16" textAnchor="middle" fontSize="12" fontWeight="700" fill="#ffe040">梦想</text>
            <text x="17" y="27" textAnchor="middle" fontSize="12" fontWeight="700" fill="#ffe040">启航</text>
          </svg>
          梦想启航战斗群
        </TaskButton>
        <Tray>
          <Grip $dark />
          <TrayButton aria-label="输入法"><svg width="16" height="16" viewBox="0 0 16 16"><rect width="16" height="16" fill="#f01010" /><text x="8" y="13" textAnchor="middle" fontSize="14" fill="#fff">極</text></svg></TrayButton>
          <TrayButton aria-label="帮助"><svg width="16" height="16" viewBox="0 0 16 16"><circle cx="8" cy="8" r="7" fill="#1030c0" stroke="#c0d0ff" /><text x="8" y="12" textAnchor="middle" fontSize="11" fontWeight="700" fill="#fff">?</text></svg></TrayButton>
          <TrayButton aria-label="还原"><svg width="10" height="18" viewBox="0 0 10 18"><path d="M3.500 1.500h5v4h-5zM1.500 3.500h5v4h-5z" fill="none" stroke="#fff" /><path d="M2 14h6l-3 3z" fill="#fff" /></svg></TrayButton>
          <TrayButton aria-label="浏览器"><svg width="18" height="18" viewBox="0 0 18 18"><circle cx="9" cy="9" r="6" fill="none" stroke="#fff" strokeWidth="5" /><path d="M3 9a6 6 0 0 1 6-6" fill="none" stroke="#30a0f0" strokeWidth="4" /><path d="M9 3a6 6 0 0 1 5 9" fill="none" stroke="#30a040" strokeWidth="4" /><path d="M14 12a6 6 0 0 1-10 0" fill="none" stroke="#e04030" strokeWidth="4" /><circle cx="9" cy="9" r="3" fill="#fff" /></svg></TrayButton>
          <TrayButton aria-label="安全卫士"><svg width="18" height="18" viewBox="0 0 18 18"><circle cx="9" cy="9" r="8" fill="#f8e020" /><path d="M1 9a8 8 0 0 0 12 7q-2-6-12-7zM9 1a8 8 0 0 1 8 8q-6-2-8-8z" fill="#60b820" /><path d="M9 5v8M5 9h8" stroke="#064" strokeWidth="3" /></svg></TrayButton>
          <TrayButton aria-label="网络"><svg width="16" height="16" viewBox="0 0 16 16"><path d="M5.500 4.500h10v8h-10zM8 15h6M1.500 1v3h3V1M3 4v10h3" fill="none" stroke="#fff" strokeWidth="1.300" /></svg></TrayButton>
          <TrayButton aria-label="音频"><svg width="16" height="16" viewBox="0 0 16 16"><circle cx="8" cy="8" r="7" fill="#444" stroke="#999" /><path d="M8 3c5 2 3 5 0 5s-3 4 2 5" fill="none" stroke="#fff" strokeWidth="2" /></svg></TrayButton>
          <TrayButton aria-label="音量"><svg width="14" height="14" viewBox="0 0 14 14"><path d="M1 5h2l4-4v12L3 9H1z" fill="#fff" /><path d="M9 4q2 3 0 6M11 3q3 4 0 8" fill="none" stroke="#fff" /></svg></TrayButton>
          <Clock>17:01<br />2017-09-15</Clock>
          <ShowDesktop aria-label="显示桌面" />
        </Tray>
      </TaskBar>

      <Watermark>
        <MarkName>股票公式指标网</MarkName>
        <MarkUrl>www.gszx.com.cn</MarkUrl>
      </Watermark>

      <Bubble>
        <svg width="50" height="47" viewBox="0 0 50 47" aria-hidden="true">
          <circle cx="25" cy="23.500" r="22" fill="#3cc05c" stroke="#e4e4e4" strokeWidth="3" />
          <text x="5" y="28" fontSize="12" fontWeight="700" fill="#fff">47</text>
        </svg>
      </Bubble>

      <AlertWindow>
        <AlertTitle>
          <svg width="14" height="14" viewBox="0 0 14 14" aria-hidden="true"><circle cx="7" cy="7" r="6" fill="#f06020" stroke="#ffd0b0" /><circle cx="6" cy="4" r="2" fill="#ffe8c0" /></svg>
          条件预警[运行中] 品种数:2772 条数:25 &nbsp;&gt;
        </AlertTitle>
        <AlertTable>
          <tbody>
            {alerts.map(([name, price, pct, sig], k) => (
              <tr key={k}>
                <AlertCell $w={19}>
                  <AlertGlyph viewBox="0 0 14 10" aria-hidden="true"><path d="M9 0l4 4H5zM9 4l4 4H5zM7 8h4v1.500H7z" fill="#ff0" /></AlertGlyph>
                </AlertCell>
                <AlertCell $w={78}>{name}</AlertCell>
                <AlertCell $w={50} $num>15:40</AlertCell>
                <AlertCell $w={42} $num>{price}</AlertCell>
                <AlertCell $w={60} $num>{pct}</AlertCell>
                <AlertSignal>{sig}</AlertSignal>
              </tr>
            ))}
          </tbody>
        </AlertTable>
        <AlertFooter>
          <AlertButton $w={57}>关闭预警</AlertButton>
          <AlertButton $w={41} $push>操作</AlertButton>
          <AlertButton $w={41}>分析</AlertButton>
        </AlertFooter>
      </AlertWindow>

      <Ime>
        <ImeRow>
          <svg width="7" height="12" viewBox="0 0 7 12" aria-hidden="true"><path d="M1 5l2.500-3L6 5M1 10l2.500-3L6 10" fill="none" stroke="#fff" strokeWidth="1.300" /></svg>
          <ImeButton $wide>五笔字型</ImeButton>
          <svg width="24" height="12" viewBox="0 0 24 12" aria-hidden="true"><path d="M7 1q4 6-5 8q7 3 8-3q0-3-3-5zM21 4h3q0 4-3 5q1-2 0-3z" fill="#fff" /><circle cx="17" cy="5" r="1.500" fill="none" stroke="#fff" /></svg>
        </ImeRow>
        <ImeRow>
          <svg width="14" height="14" viewBox="0 0 14 14" aria-hidden="true"><path d="M2 6l3 3V2M5 8V2M7.500 8V1M10 8V2M12.500 8V4" stroke="#fff" strokeWidth="1.800" fill="none" /><path d="M4 8h9q0 5-4 5t-5-5z" fill="#fff" /></svg>
          <svg width="15" height="14" viewBox="0 0 15 14" aria-hidden="true"><circle cx="5" cy="5" r="3.500" fill="none" stroke="#fff" strokeWidth="1.500" /><path d="M8 8l6 5" stroke="#fff" strokeWidth="2.500" /></svg>
          <ImeButton>简</ImeButton>
          <ImeButton>GB</ImeButton>
          <svg width="18" height="11" viewBox="0 0 18 11" aria-hidden="true"><path d="M.5.500h17v10H.5z" fill="none" stroke="#48b048" /><path d="M2 3h14M2 5.500h14M4 8h10" stroke="#48b048" strokeDasharray="2 1" /></svg>
        </ImeRow>
      </Ime>
    </Desktop>
  );
}
